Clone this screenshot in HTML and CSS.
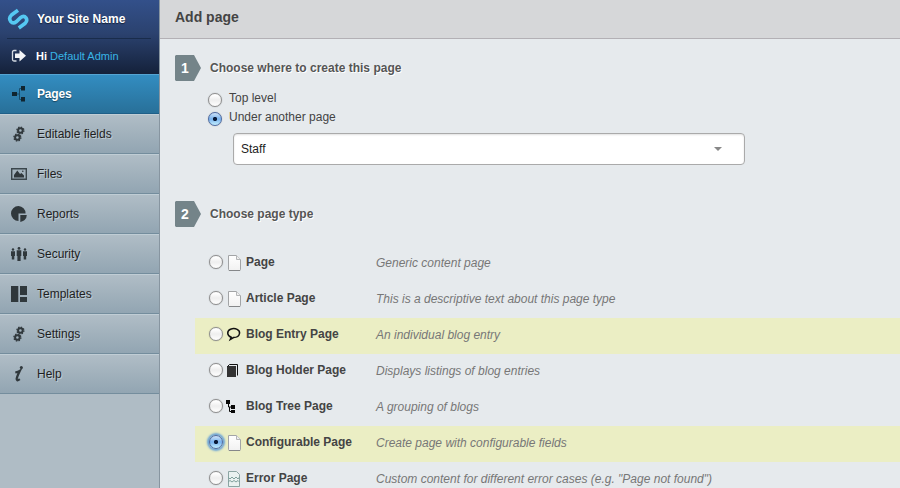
FILE: index.html
```html
<!DOCTYPE html>
<html lang="en">
<head>
<meta charset="utf-8">
<title>Add page</title>
<link rel="stylesheet" href="styles.css">
</head>
<body>
<svg width="0" height="0" class="defs">
  <defs>
    <linearGradient id="paper" x1="0" y1="0" x2="0" y2="1"><stop offset="0" stop-color="#fff"/><stop offset="1" stop-color="#f1f1f1"/></linearGradient>
    <symbol id="gears" viewBox="0 0 18 18">
      <circle cx="10.400" cy="5.500" r="2.300" fill="none" stroke="#30383c" stroke-width="2"/>
      <circle cx="10.400" cy="5.500" r="3.500" fill="none" stroke="#30383c" stroke-width="1.300" stroke-dasharray="1.400 1.350"/>
      <circle cx="7.400" cy="12.500" r="2.300" fill="none" stroke="#30383c" stroke-width="2"/>
      <circle cx="7.400" cy="12.500" r="3.500" fill="none" stroke="#30383c" stroke-width="1.300" stroke-dasharray="1.400 1.350"/>
    </symbol>
    <symbol id="page" viewBox="0 0 16 18">
      <path d="M2.500 1.500H10.500L14.500 5.500V15.500Q14.500 16.500 13.500 16.500H3.500Q2.500 16.500 2.500 15.500Z" fill="url(#paper)" stroke="#a2a4a6"/>
      <path d="M3 16.500H14" stroke="#858789"/>
      <path d="M10.500 1.500V5.500H14.500" fill="#eee" stroke="#b4b6b8"/>
    </symbol>
  </defs>
</svg>
<div class="app">
  <aside class="sidebar">
    <div class="brand-block">
      <div class="brand">
        <svg class="logo" width="22" height="22" viewBox="0 0 22 22" fill="none" stroke="#55c8f2" stroke-width="3.600"><path d="M11 2.200L4.500 7Q1.300 10 3.600 13.300Q6 16.200 9.200 13.800L13.500 9.700Q16.800 7 19 9.800Q20.800 12.800 18.200 15.300L11.800 20"/></svg>
        <span class="site">Your Site Name</span>
      </div>
      <div class="user">
        <svg class="exit" width="16" height="14" viewBox="0 0 16 14"><path d="M5.500 1.500H3Q1.500 1.500 1.500 3V10.500Q1.500 12 3 12H5.500" fill="none" stroke="#d5dbe3" stroke-width="1.300"/><path d="M4 4.500H8.500V1L15 6.700L8.500 12.500V9H4Z" fill="#f2f4f7"/></svg>
        <span class="hello">Hi <a>Default Admin</a></span>
      </div>
    </div>
    <nav class="menu">
      <a class="item current"><svg width="18" height="18" viewBox="0 0 18 18"><path d="M5 9H9M13 3.500H9.500V14.500H13" fill="none" stroke="#184d6b" stroke-width="1"/><path d="M2 7H7V11H2ZM11 1H15V5.500H11ZM11 12H15V16.500H11Z" fill="#102530"/></svg><span>Pages</span></a>
      <a class="item"><svg width="18" height="18"><use href="#gears"/></svg><span>Editable fields</span></a>
      <a class="item"><svg width="18" height="18" viewBox="0 0 18 18"><path d="M1.700 3.700H16.300V14.300H1.700Z" fill="none" stroke="#3b464c" stroke-width="1.400"/><path d="M4 12.500V10L7.300 5.500L10 9L11.500 8L14 10.500V12.500Z" fill="#30383c"/><circle cx="12.800" cy="6.300" r=".8" fill="#30383c"/></svg><span>Files</span></a>
      <a class="item"><svg width="18" height="18" viewBox="0 0 18 18"><path d="M8.500 1A7.500 7.500 0 1 0 8.500 16V8.500H15.600A7.500 7.500 0 0 0 8.500 1Z" fill="#30383c"/><path d="M10.300 10H16.800Q16.500 15.500 10.300 17Z" fill="#30383c"/></svg><span>Reports</span></a>
      <a class="item"><svg width="18" height="18" viewBox="0 0 18 18" fill="#30383c"><circle cx="3" cy="4.500" r="1.200"/><circle cx="9" cy="3.400" r="1.400"/><circle cx="15" cy="4.500" r="1.200"/><path d="M1 6.200H5V11H4.300V14.500H1.800V11H1ZM6.700 5.300H11.300V11H10.600V16H7.400V11H6.700ZM13 6.200H17V11H16.200V14.500H13.700V11H13Z"/></svg><span>Security</span></a>
      <a class="item"><svg width="18" height="18" viewBox="0 0 18 18" fill="#30383c"><path d="M1 1H8.300V17H1ZM10 1H17V10H10ZM10 12H17V17H10Z"/></svg><span>Templates</span></a>
      <a class="item"><svg width="18" height="18"><use href="#gears"/></svg><span>Settings</span></a>
      <a class="item"><svg width="18" height="18" viewBox="0 0 18 18"><circle cx="11.300" cy="2.500" r="1.500" fill="#30383c"/><path d="M5.300 7.500Q8.500 6.800 9.700 6Q7.500 10.500 6.700 13.500Q6.300 16.800 9.800 14.200" fill="none" stroke="#30383c" stroke-width="2.300"/></svg><span>Help</span></a>
    </nav>
  </aside>
  <main class="content">
    <header class="titlebar"><h1>Add page</h1></header>
    <section class="step">
      <div class="step-head"><span class="badge">1</span><h2>Choose where to create this page</h2></div>
      <div class="parents">
        <label class="choice"><i class="radio"></i><span>Top level</span></label>
        <label class="choice"><i class="radio on"></i><span>Under another page</span></label>
        <div class="select"><span>Staff</span><i class="arrow"></i></div>
      </div>
    </section>
    <section class="step second">
      <div class="step-head"><span class="badge">2</span><h2>Choose page type</h2></div>
      <div class="types">
        <div class="type"><i class="radio"></i><svg width="16" height="18"><use href="#page"/></svg><b>Page</b><em>Generic content page</em></div>
        <div class="type"><i class="radio"></i><svg width="16" height="18"><use href="#page"/></svg><b>Article Page</b><em>This is a descriptive text about this page type</em></div>
        <div class="type lit"><i class="radio"></i><svg width="16" height="18" viewBox="0 0 16 18"><path d="M5.200 11.300C.7 9.700.7 4.800 4.500 3.200C9.500 1.500 14.200 4 13.500 7.500C13 10.500 9.500 11.500 7.500 11.600L4.300 13.500Z" fill="none" stroke="#111" stroke-width="1.500"/></svg><b>Blog Entry Page</b><em>An individual blog entry</em></div>
        <div class="type"><i class="radio"></i><svg width="16" height="18" viewBox="0 0 16 18"><path d="M1 4H10V15H1Z" fill="#333"/><path d="M1.500 4.500L3.500 2.500H11.500V13.500" fill="none" stroke="#111"/></svg><b>Blog Holder Page</b><em>Displays listings of blog entries</em></div>
        <div class="type"><i class="radio"></i><svg width="16" height="18" viewBox="0 0 16 18"><path d="M0 2H4V6H0ZM5 7H9V11H5ZM5 12H9V15H5Z" fill="#080808"/><path d="M2.500 6V9H5M3.500 9V13.500H5" fill="none" stroke="#080808"/></svg><b>Blog Tree Page</b><em>A grouping of blogs</em></div>
        <div class="type lit"><i class="radio on focus"></i><svg width="16" height="18"><use href="#page"/></svg><b>Configurable Page</b><em>Create page with configurable fields</em></div>
        <div class="type"><i class="radio"></i><svg width="16" height="18" viewBox="0 0 16 18"><path d="M2.500 1.500H10.500L13.500 4.500V16.500H2.500Z" fill="#e9f1f0" stroke="#8ca5a3"/><path d="M2 7L4 9L6 7L8 9L10 7L12 9L13.500 7M2 12L4 10.500L6 12L8 10.500L10 12L12 10.500L13.500 12" fill="none" stroke="#7fa09c"/></svg><b>Error Page</b><em>Custom content for different error cases (e.g. "Page not found")</em></div>
      </div>
    </section>
  </main>
</div>
</body>
</html>
```
FILE: styles.css
```css
* { box-sizing: border-box; }
body { margin: 0; font: 12px/18px "Liberation Sans", Arial, sans-serif; color: #444; overflow: hidden; }
.defs { display: block; height: 0; }
.app { display: flex; width: 900px; height: 488px; overflow: hidden; }
.sidebar { width: 160px; flex: none; background: #afbcc5; border-right: 1px solid #8795a0; }
.brand-block { height: 74px; padding: 0 8px 0 7px; background: linear-gradient(#33508a, #2b426f 45%, #14213a); }
.brand { height: 39px; display: flex; align-items: center; border-bottom: 1px solid #192c4b; }
.logo { flex: none; }
.site { margin-left: 8px; color: #fff; font-weight: bold; white-space: nowrap; letter-spacing: .05px; text-shadow: 0 1px 1px #14213a; }
.user { height: 34px; display: flex; align-items: center; padding-left: 4px; }
.hello { margin-left: 9px; color: #fff; font-size: 11px; font-weight: bold; white-space: nowrap; }
.hello a { color: #39b5e6; font-weight: normal; }
.item { display: flex; align-items: center; height: 40px; padding-left: 10px; color: #1f1f1f; background: linear-gradient(#b0bdc6, #92a5b2); border-top: 1px solid #c0cdd5; border-bottom: 1px solid #748d9d; text-shadow: 1px 1px 0 #bfcdd6; }
.item svg { flex: none; }
.item span { margin-left: 9px; }
.current { color: #fff; font-weight: bold; letter-spacing: -.2px; background: linear-gradient(#338dc1, #287099); border-top-color: #55a4d2; border-bottom-color: #1f5f88; text-shadow: 0 1px 1px #174661; }
.content { flex: 1; min-width: 0; background: #e6eaed; }
.titlebar { height: 39px; padding: 8px 15px; background: #d6d7d9; border-bottom: 1px solid #b3b0b5; }
h1 { margin: 0; font-size: 14px; line-height: 18px; color: #444; }
.step { height: 146px; padding: 16px 0 0 15px; }
.step-head { display: flex; align-items: center; height: 26px; }
.badge { width: 26px; height: 26px; padding-right: 6px; text-align: center; color: #fff; font: bold 14px/26px "Liberation Sans", sans-serif; background: #748489; clip-path: polygon(0 1px, 1px 0, 19px 0, 26px 13px, 19px 26px, 1px 26px, 0 25px); }
h2 { margin: 0 0 0 9px; font-size: 12px; line-height: 18px; color: #555; text-shadow: 1px 1px 0 #fff; }
.parents { padding: 8px 0 0 33px; }
.choice { display: flex; height: 19px; }
.choice span { margin-left: 7px; }
.choice .radio { margin-top: 4px; }
.radio { display: block; flex: none; width: 14px; height: 14px; border: 1px solid #8e8e8e; border-radius: 50%; background: linear-gradient(#fff 10%, #eee 50%, #fff); box-shadow: 0 0 1px rgba(0,0,0,.4); }
.radio.on { border-color: #4c69a3; background: radial-gradient(circle at 50% 50%, #0b1c3a 0 1.700px, transparent 2.500px), linear-gradient(#d0e4f8, #78b2ee 50%, #c4f0ff); }
.radio.focus { box-shadow: 0 0 2px 2px #6ba3d6; }
.select { display: flex; align-items: center; justify-content: space-between; width: 512px; height: 32px; margin: 6px 0 0 25px; padding: 0 22px 0 7px; border: 1px solid #aaa; border-radius: 4px; background: #fff; box-shadow: inset 0 1px 2px rgba(0,0,0,.12); color: #222; }
.arrow { border: 4px solid transparent; border-top-color: #888; border-bottom: 0; }
.types { margin: 19px 0 0 20px; }
.type { display: flex; align-items: center; height: 36px; padding: 0 0 4px 14px; }
.lit { background: #ebeec4; }
.type .radio { margin-top: -1px; }
.type svg { flex: none; margin: 1px 0 0 3px; }
.type b { width: 130px; margin-left: 4px; }
.type em { color: #777; white-space: nowrap; margin-top: 2px; }
```
